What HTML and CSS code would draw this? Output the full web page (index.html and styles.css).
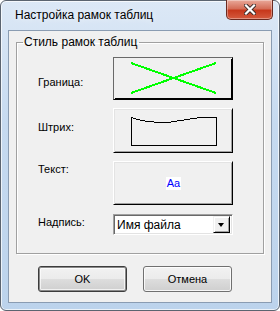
FILE: index.html
```html
<!DOCTYPE html>
<html lang="ru">
<head>
    <meta charset="UTF-8">
    <title>Настройка рамок таблиц</title>
    <link rel="stylesheet" href="styles.css">
</head>
<body>
    <div class="window">
        <div class="titlebar">
            <span class="title">Настройка рамок таблиц</span>
            <div class="close-btn">
                <svg width="12" height="11" viewBox="0 0 12 11">
                    <path d="M2,1.5 L10,9.5 M10,1.5 L2,9.5" stroke="#3a2a28" stroke-width="4" stroke-linecap="square"/>
                    <path d="M2,1.5 L10,9.5 M10,1.5 L2,9.5" stroke="#fff" stroke-width="2.2" stroke-linecap="square"/>
                </svg>
            </div>
        </div>

        <div class="client">
            <fieldset class="group">
                <legend>Стиль рамок таблиц</legend>

                <!-- граница -->
                <div class="row row-border">
                    <span class="label">Граница:</span>
                    <div class="preview preview-active">
                        <svg class="preview-art" viewBox="0 0 118 41" shape-rendering="crispEdges">
                            <path d="M17,5 L102,35 M17,35 L102,5" stroke="#00ff00" stroke-width="2"/>
                        </svg>
                    </div>
                </div>

                <!-- штрих -->
                <div class="row row-stroke">
                    <span class="label">Штрих:</span>
                    <div class="preview preview-tall">
                        <svg class="preview-art" viewBox="0 0 118 43" shape-rendering="crispEdges">
                            <path d="M17.5,8.5 L23.5,10.5 L33.5,12.5 L46.5,13.5 L53.5,13.5 L66.5,11.5 L86.5,8.5 L102.5,8.5 L102.5,36.5 L17.5,36.5 Z" fill="none" stroke="#000" stroke-width="1"/>
                        </svg>
                    </div>
                </div>

                <!-- текст -->
                <div class="row row-text">
                    <span class="label">Текст:</span>
                    <div class="preview preview-text">
                        <span class="sample">Aa</span>
                    </div>
                </div>

                <!-- надпись -->
                <div class="row row-caption">
                    <span class="label">Надпись:</span>
                    <div class="combo">
                        <span class="combo-value">Имя файла</span>
                        <span class="combo-arrow"></span>
                    </div>
                </div>
            </fieldset>

            <div class="buttons">
                <button class="btn btn-default">OK</button>
                <button class="btn">Отмена</button>
            </div>
        </div>
    </div>
</body>
</html>
```

FILE: styles.css
```css
    * {
        box-sizing: border-box;
    }

    body {
        margin: 0;
        background: #fff;
        font-family: 'Liberation Sans', Arial, sans-serif;
        font-size: 11px;
        color: #000;
    }

    .window {
        position: relative;
        width: 280px;
        height: 311px;
        border: 1px solid #5b6470;
        border-radius: 6px;
        background: linear-gradient(#dce8f6, #c6daf0 40%, #bcd3ec);
        box-shadow: inset 0 0 0 1px rgba(255,255,255,0.7);
        padding: 0 7px 7px 7px;
        display: flex;
        flex-direction: column;
    }

    .titlebar {
        height: 29px;
        display: flex;
        align-items: center;
        padding-left: 7px;
        padding-bottom: 1px;
    }

    .title {
        font-size: 12px;
        color: #000;
        text-shadow: 0 0 6px rgba(255,255,255,0.9);
    }

    .close-btn {
        position: absolute;
        top: -1px;
        right: 6px;
        width: 47px;
        height: 20px;
        border: 1px solid #6b2a20;
        border-top: none;
        border-radius: 0 0 5px 5px;
        background: linear-gradient(#e9a99a, #d56e58 45%, #c7381c 55%, #d45a3e);
        box-shadow: inset 0 0 0 1px rgba(255,255,255,0.35);
        display: flex;
        align-items: center;
        justify-content: center;
    }

    .client {
        flex: 1;
        border: 1px solid #8a9cb2;
        background: #f0f0f0;
        padding: 5px 0 0 7px;
    }

    .group {
        margin: 0;
        width: 248px;
        border: 1px solid #a0a0a0;
        box-shadow: inset 1px 1px 0 #fff, 1px 1px 0 #fff;
        padding: 8px 0 18px 21px;
    }

    .group legend {
        margin-left: -15px;
        padding: 0 2px 0 1px;
        line-height: 13px;
        font-size: 12px;
    }

    .row {
        display: grid;
        grid-template-columns: 75px 120px;
        align-items: start;
        margin-bottom: 8px;
    }

    .row-text {
        margin-bottom: 9px;
    }

    .row-caption {
        margin-bottom: 0;
    }

    .label {
        line-height: 13px;
        font-size: 11px;
    }

    .row-border .label { margin-top: 19px; }
    .row-stroke .label { margin-top: 13px; }
    .row-text .label { margin-top: 2px; }
    .row-caption .label { margin-top: 2px; }

    .preview {
        height: 43px;
        background: #f0f0f0;
        border: 1px solid;
        border-color: #fff #000 #000 #fff;
        box-shadow: inset 1px 1px 0 #e3e3e3, inset -1px -1px 0 #a0a0a0;
        display: flex;
        align-items: center;
        justify-content: center;
    }

    .preview-active {
        border-color: #696969 #000 #000 #696969;
        box-shadow: inset 1px 1px 0 #f0f0f0, inset -1px -1px 0 #000;
    }

    .preview-tall {
        height: 45px;
    }

    .preview-text {
        height: 44px;
    }

    .preview-art {
        width: 118px;
        height: 100%;
        display: block;
    }

    .sample {
        background: #fff;
        color: #0000ff;
        font-size: 11px;
        line-height: 13px;
        padding: 0 1px;
        margin-left: 1px;
        margin-top: 1px;
    }

    .combo {
        height: 21px;
        background: #fff;
        border: 1px solid;
        border-color: #a0a0a0 #fff #fff #a0a0a0;
        box-shadow: inset 1px 1px 0 #696969, inset -1px -1px 0 #e3e3e3;
        display: flex;
        align-items: center;
        padding: 2px 2px 2px 3px;
    }

    .combo-value {
        flex: 1;
        font-size: 12px;
    }

    .combo-arrow {
        width: 17px;
        height: 17px;
        background: #f0f0f0;
        border: 1px solid;
        border-color: #f0f0f0 #000 #000 #f0f0f0;
        box-shadow: inset 1px 1px 0 #fff, inset -1px -1px 0 #a0a0a0;
        position: relative;
    }

    .combo-arrow::after {
        content: "";
        position: absolute;
        left: 4px;
        top: 6px;
        border-left: 3.5px solid transparent;
        border-right: 3.5px solid transparent;
        border-top: 4px solid #000;
    }

    .buttons {
        display: flex;
        gap: 16px;
        margin-top: 12px;
        padding-left: 22px;
    }

    .btn {
        width: 89px;
        height: 26px;
        border: 1px solid #707070;
        border-radius: 3px;
        background: linear-gradient(#f2f2f2, #ebebeb 50%, #dddddd 51%, #cfcfcf);
        box-shadow: inset 0 0 0 1px rgba(255,255,255,0.8);
        font-family: 'Liberation Sans', Arial, sans-serif;
        font-size: 11px;
        color: #000;
        padding: 0;
    }

    .btn-default {
        border-color: #3c3c3c;
        box-shadow: inset 0 0 0 1px #8a8a8a, inset 0 0 0 2px rgba(255,255,255,0.7);
    }
```
